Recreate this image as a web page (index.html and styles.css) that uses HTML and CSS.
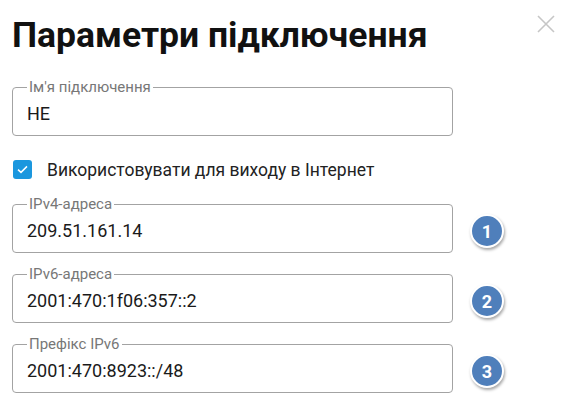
FILE: index.html
```html
<!DOCTYPE html>
<html lang="uk">
<head>
  <meta charset="UTF-8">
  <meta name="viewport" content="width=device-width, initial-scale=1.0">
  <title>Параметри підключення</title>
  <link rel="stylesheet" href="styles.css">
</head>
<body>
  <div class="dialog">
    <div class="dialog-header">
      <h1>Параметри підключення</h1>
      <button class="close-button" aria-label="Закрити">
        <svg width="18" height="18" viewBox="0 0 18 18">
          <path d="M1 1 L17 17 M17 1 L1 17" stroke="#c6c6c6" stroke-width="1.6" fill="none"/>
        </svg>
      </button>
    </div>

    <fieldset class="field">
      <legend>Ім'я підключення</legend>
      <input type="text" value="НЕ">
    </fieldset>

    <label class="check-row">
      <span class="checkbox">
        <svg width="11" height="9" viewBox="0 0 11 9">
          <path d="M1 4.6 L4 7.4 L10 1.4" stroke="#fff" stroke-width="1.5" fill="none"/>
        </svg>
      </span>
      Використовувати для виходу в Інтернет
    </label>

    <div class="field-list">
      <div class="field-row">
        <fieldset class="field">
          <legend>IPv4-адреса</legend>
          <input type="text" value="209.51.161.14">
        </fieldset>
        <span class="step-badge">1</span>
      </div>

      <div class="field-row">
        <fieldset class="field">
          <legend>IPv6-адреса</legend>
          <input type="text" value="2001:470:1f06:357::2">
        </fieldset>
        <span class="step-badge">2</span>
      </div>

      <div class="field-row">
        <fieldset class="field">
          <legend>Префікс IPv6</legend>
          <input type="text" value="2001:470:8923::/48">
        </fieldset>
        <span class="step-badge">3</span>
      </div>
    </div>
  </div>
</body>
</html>
```

FILE: styles.css
```css
* {
  box-sizing: border-box;
}

body {
  margin: 0;
  font-family: Roboto, 'Liberation Sans', sans-serif;
  background: #fff;
  color: #1a1a1a;
}

.dialog {
  padding: 0 11px 0 12px;
}

.dialog-header {
  display: flex;
  justify-content: space-between;
  align-items: flex-start;
}

h1 {
  margin: 0;
  padding-top: 13px;
  font-size: 35.5px;
  line-height: 44px;
  font-weight: 700;
  color: #111;
}

.close-button {
  margin-top: 15px;
  padding: 0;
  border: none;
  background: none;
  cursor: pointer;
  line-height: 0;
}

/* outlined text field with the label sitting on the border */
.field {
  width: 441px;
  margin: 0;
  padding: 8px 14px 9px;
  border: 1px solid #a3a3a3;
  border-radius: 4px;
}

.dialog > .field {
  margin-top: 23px;
}

.field legend {
  margin-left: 0;
  padding: 0 2px;
  font-size: 15px;
  line-height: 14px;
  color: #777;
}

.field input {
  display: block;
  width: 100%;
  height: 24px;
  padding: 0;
  border: none;
  outline: none;
  background: transparent;
  font-family: inherit;
  font-size: 18px;
  line-height: 24px;
  color: #1a1a1a;
}

.check-row {
  display: flex;
  align-items: center;
  height: 23px;
  margin: 22px 0 16px 1px;
  font-size: 17.5px;
  color: #222;
  cursor: pointer;
}

.checkbox {
  display: flex;
  align-items: center;
  justify-content: center;
  width: 19px;
  height: 19px;
  margin-right: 15px;
  border-radius: 3px;
  background: #1b97de;
}

.field-list {
  display: flex;
  flex-direction: column;
  gap: 14px;
}

.field-row {
  display: flex;
  align-items: flex-start;
}

.step-badge {
  display: flex;
  align-items: center;
  justify-content: center;
  width: 34px;
  height: 34px;
  margin: 17px 0 0 17px;
  border: 2px solid #fff;
  border-radius: 50%;
  background: #4f7fbb;
  box-shadow: 1px 2px 3px rgba(0, 0, 0, 0.35);
  color: #fff;
  font-size: 18px;
  font-weight: 700;
}
```
